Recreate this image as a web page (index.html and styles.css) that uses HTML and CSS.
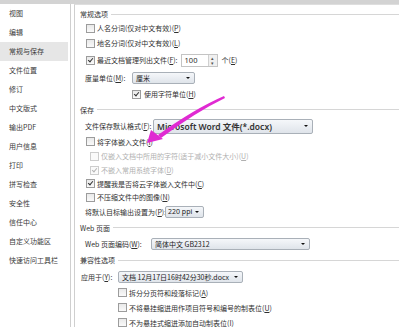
FILE: index.html
```html
<!DOCTYPE html>
<html lang="zh-CN">
<head>
    <meta charset="UTF-8">
    <meta name="viewport" content="width=device-width, initial-scale=1.0">
    <title>选项 - 常规与保存</title>
    <link rel="stylesheet" href="styles.css">
</head>
<body>
    <div class="topbar"></div>
    <div class="dialog">
        <ul class="menu">
            <li>视图</li>
            <li>编辑</li>
            <li class="active">常规与保存</li>
            <li>文件位置</li>
            <li>修订</li>
            <li>中文版式</li>
            <li>输出PDF</li>
            <li>用户信息</li>
            <li>打印</li>
            <li>拼写检查</li>
            <li>安全性</li>
            <li>信任中心</li>
            <li>自定义功能区</li>
            <li>快速访问工具栏</li>
        </ul>

        <div class="panel">
            <div class="group h14">常规选项</div>
            <div class="row h14 cb-row"><span class="cb"></span>人名分词(仅对中文有效)(<u>P</u>)</div>
            <div class="row h16 cb-row"><span class="cb"></span>地名分词(仅对中文有效)(<u>L</u>)</div>
            <div class="row h18 cb-row">
                <span class="cb checked"></span>最近文档管理列出文件(<u>F</u>):
                <span class="spin"><span class="spin-val">100</span><span class="spin-btn"><i>▴</i><i>▾</i></span></span>
                <span class="unit">个(<u>E</u>)</span>
            </div>
            <div class="row h18 label-row">
                <span class="label w47">度量单位(<u>M</u>):</span>
                <span class="select w63">厘米</span>
            </div>
            <div class="row h14 sub-row"><span class="cb checked"></span>使用字符单位(<u>H</u>)</div>

            <div class="group h17">保存</div>
            <div class="row h16 label-row">
                <span class="label w68">文件保存默认格式(<u>F</u>):</span>
                <span class="select w160 tall latin">Microsoft Word 文件(*.docx)</span>
            </div>
            <div class="row h15 cb-row"><span class="cb"></span>将字体嵌入文件(<u>I</u>)</div>
            <div class="row h14 cb-row indent disabled"><span class="cb"></span>仅嵌入文档中所用的字符(适于减小文件大小)(<u>U</u>)</div>
            <div class="row h14 cb-row indent disabled"><span class="cb checked"></span>不嵌入常用系统字体(<u>D</u>)</div>
            <div class="row h13 cb-row"><span class="cb checked"></span>提醒我是否将云字体嵌入文件中(<u>C</u>)</div>
            <div class="row h14 cb-row"><span class="cb"></span>不压缩文件中的图像(<u>N</u>)</div>
            <div class="row h15 label-row">
                <span class="label w80">将默认目标输出设置为(<u>P</u>):</span>
                <span class="select w39 small">220 ppi</span>
            </div>

            <div class="group h17">Web 页面</div>
            <div class="row h15 label-row">
                <span class="label w66">Web 页面编码(<u>W</u>):</span>
                <span class="select w159">简体中文 GB2312</span>
            </div>

            <div class="group h18">兼容性选项</div>
            <div class="row h16 apply-row">
                <span class="label w37">应用于(<u>Y</u>):</span>
                <span class="select w125">文档 12月17日16时42分30秒.docx</span>
            </div>
            <div class="row h15 compat-row"><span class="cb"></span>拆分分页符和段落标记(<u>A</u>)</div>
            <div class="row h15 compat-row"><span class="cb"></span>不将悬挂缩进用作项目符号和编号的制表位(<u>U</u>)</div>
            <div class="row h15 compat-row"><span class="cb"></span>不为悬挂式缩进添加自动制表位(<u>I</u>)</div>
        </div>
    </div>

    <!-- annotation arrow drawn over the dialog -->
    <svg class="arrow" width="399" height="327" viewBox="0 0 399 327">
        <path d="M224 96 Q194 109 158 135 L161 138 Q196 112 225 98 Z" fill="#e02ad2"/>
        <polygon points="147,143 151,130 163,139" fill="#e02ad2"/>
    </svg>
</body>
</html>
```

FILE: styles.css
```css
body {
    margin: 0;
    padding: 0;
    width: 399px;
    height: 327px;
    overflow: hidden;
    background: #fff;
    color: #2f2f2f;
    font-family: "Noto Sans CJK SC", "Noto Sans", sans-serif;
    font-size: 7px;
    position: relative;
}

u {
    text-decoration: underline;
    text-underline-offset: 1px;
}

.topbar {
    height: 4px;
    background: #d3d3d3;
}

.dialog {
    display: flex;
    height: 323px;
}

/* left navigation */
.menu {
    list-style: none;
    margin: 0;
    padding: 0;
    width: 70px;
    border-right: 1px solid #cfcfcf;
    flex-shrink: 0;
}

.menu li {
    height: 19px;
    line-height: 19px;
    padding-left: 9px;
    color: #3a3a3a;
}

.menu li.active {
    background: #e6e6e6;
    margin-right: 2px;
}

/* right options panel */
.panel {
    flex: 1;
    margin-left: 3px;
    border-left: 1px solid #cfcfcf;
    border-top: 1px solid #dedede;
    padding-top: 2px;
    padding-left: 5px;
}

.group {
    display: flex;
    align-items: center;
    color: #333;
}

.group::after {
    content: "";
    flex: 1;
    height: 1px;
    background: #d6d6d6;
    margin-left: 3px;
}

.row {
    display: flex;
    align-items: center;
    white-space: nowrap;
}

.h13 { height: 13px; }
.h14 { height: 14px; }
.h15 { height: 15px; }
.h16 { height: 16px; }
.h17 { height: 17px; }
.h18 { height: 18px; }

.cb-row { padding-left: 6px; }
.cb-row.indent { padding-left: 10px; }
.label-row { padding-left: 5px; }
.apply-row { padding-left: 1px; }
.sub-row { padding-left: 52px; }
.compat-row { padding-left: 38px; }

.disabled {
    color: #b0b0b0;
}

/* checkbox */
.cb {
    width: 7px;
    height: 7px;
    border: 1px solid #9c9c9c;
    background: linear-gradient(#e9e9e9, #fafafa);
    margin-right: 2px;
    flex-shrink: 0;
    position: relative;
}

.sub-row .cb { margin-right: 3px; }

.cb.checked::after {
    content: "";
    position: absolute;
    left: 2px;
    top: 0;
    width: 2px;
    height: 4px;
    border: solid #333;
    border-width: 0 1px 1px 0;
    transform: rotate(40deg);
}

.disabled .cb {
    border-color: #cdcdcd;
    background: #fafafa;
}

.disabled .cb.checked::after {
    border-color: #b5b5b5;
}

/* labels and controls */
.label { flex-shrink: 0; }
.w37 { width: 37px; }
.w47 { width: 47px; }
.w66 { width: 66px; }
.w68 { width: 68px; }
.w80 { width: 80px; }

.select {
    box-sizing: border-box;
    height: 12px;
    border: 1px solid #a9b0b8;
    border-radius: 2px;
    background: linear-gradient(#f5f7fa, #dfe4ea);
    padding-left: 3px;
    display: flex;
    align-items: center;
    position: relative;
    color: #222;
}

.select::after {
    content: "";
    position: absolute;
    right: 4px;
    top: 50%;
    margin-top: -1px;
    border-left: 2px solid transparent;
    border-right: 2px solid transparent;
    border-top: 2px solid #111;
}

.select.tall { height: 15px; }

.latin {
    font-family: "Noto Sans", "Noto Sans CJK SC", sans-serif;
    font-size: 8.5px;
    font-weight: 600;
    color: #333;
}

.small {
    font-family: "Noto Sans", sans-serif;
    font-size: 7px;
    padding-left: 2px;
}

.w39 { width: 39px; }
.w63 { width: 63px; }
.w125 { width: 125px; }
.w159 { width: 159px; }
.w160 { width: 160px; }

.spin {
    display: flex;
    height: 13px;
    margin-left: 3px;
    border: 1px solid #c4c4c4;
    box-sizing: border-box;
}

.spin-val {
    width: 23px;
    padding-left: 3px;
    display: flex;
    align-items: center;
    font-family: "Noto Sans", sans-serif;
    font-size: 7.5px;
}

.spin-btn {
    width: 8px;
    display: flex;
    flex-direction: column;
    border-left: 1px solid #d0d0d0;
    background: #f0f0f0;
}

.spin-btn i {
    flex: 1;
    font-style: normal;
    font-size: 5px;
    line-height: 5.5px;
    text-align: center;
    color: #555;
}

.unit { margin-left: 4px; }

.arrow {
    position: absolute;
    left: 0;
    top: 0;
    pointer-events: none;
}
```
